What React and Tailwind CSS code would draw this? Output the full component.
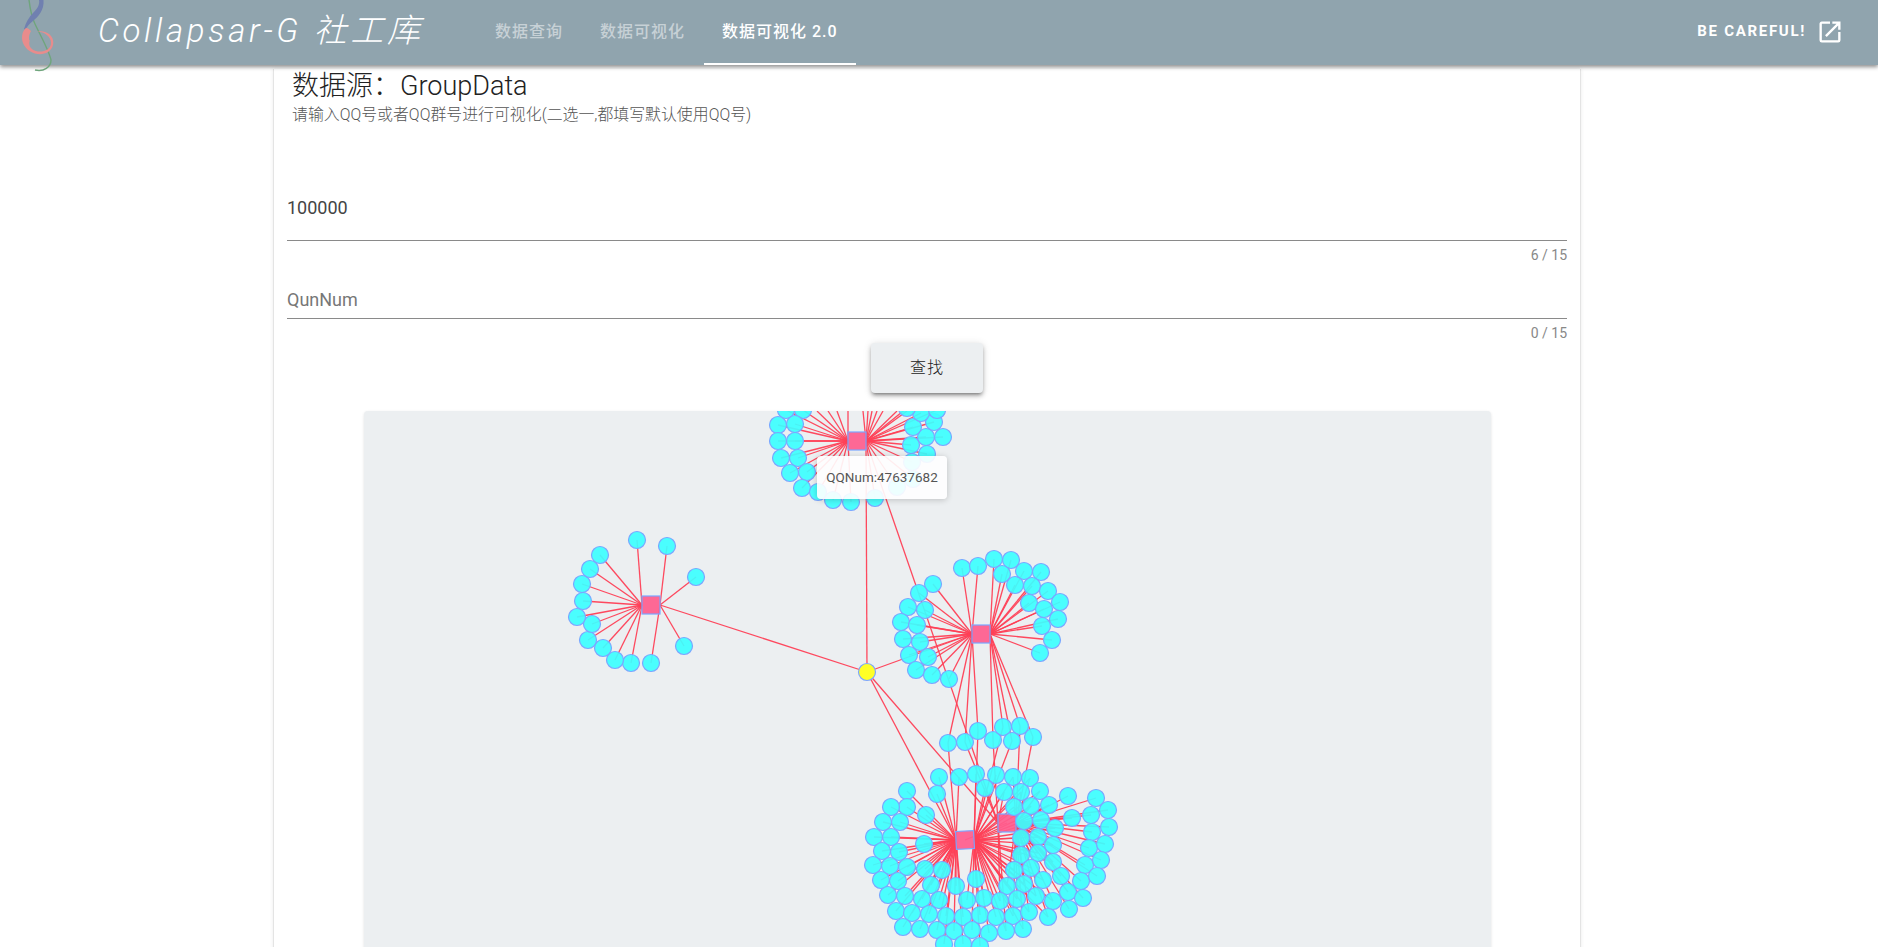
import React from "react";

// graph positions, in page pixels (svg viewBox starts at the panel's corner)
const TOP_HUB = [857, 441];
const RIGHT_HUB = [981, 634];
const LEFT_HUB = [651, 605];
const BOTTOM_HUB_A = [965, 840];
const BOTTOM_HUB_B = [1007, 823];
const CENTER = [867, 672];

const topNodes = [
  [786, 410], [803, 410], [778, 425], [795, 424], [778, 441], [795, 441], [781, 458], [798, 458], [790, 473],
  [807, 472], [802, 488], [818, 492], [833, 500], [851, 502], [875, 498], [897, 487], [913, 479], [912, 462],
  [927, 454], [911, 445], [926, 437], [943, 437], [913, 427], [934, 422], [921, 413], [937, 410], [907, 408],
];

// the rest of the top cluster sits above the panel, only its lines show
const topCutOff = [
  [817, 411], [828, 411], [837, 411], [848, 411], [863, 411], [868, 411], [872, 411], [877, 411], [883, 411], [897, 411], [907, 411],
];

const rightNodes = [
  [962, 568], [978, 566], [994, 559], [1011, 560], [1024, 571], [1041, 572], [1002, 574], [1015, 585], [1032, 586],
  [1048, 591], [1060, 602], [1029, 603], [1044, 609], [1058, 619], [1042, 626], [1052, 640], [1040, 653], [933, 584],
  [919, 593], [908, 607], [925, 610], [901, 622], [917, 625], [903, 639], [920, 642], [909, 655], [928, 657],
  [916, 670], [932, 675], [949, 679],
];

const leftNodes = [
  [637, 540], [667, 546], [696, 577], [684, 646], [651, 663], [631, 663], [615, 660], [603, 648],
  [588, 640], [592, 624], [577, 617], [583, 601], [582, 584], [590, 569], [600, 555],
];

const sharedNodes = [
  [948, 743], [965, 742], [978, 731], [993, 740], [1003, 727], [1020, 726], [1012, 741], [1033, 737],
];

const bottomNodes = [
  [939, 777], [959, 777], [976, 774], [996, 775], [1013, 777], [1030, 778], [937, 794], [985, 788], [1004, 792],
  [1021, 792], [1040, 791], [907, 791], [1068, 796], [1096, 798], [1108, 810], [1091, 815], [1014, 807], [1031, 806],
  [1049, 805], [907, 807], [891, 807], [926, 815], [883, 822], [900, 822], [1024, 821], [1041, 820], [1072, 818],
  [1055, 828], [1092, 832], [1109, 827], [874, 837], [891, 837], [1021, 838], [1038, 837], [924, 844], [1053, 845],
  [1089, 848], [1105, 844], [882, 851], [899, 852], [1021, 855], [1038, 853], [1053, 862], [1085, 865], [1101, 860],
  [873, 865], [890, 866], [907, 867], [925, 869], [942, 870], [1014, 870], [1031, 868], [1061, 876], [1081, 881],
  [1097, 876], [881, 880], [898, 881], [931, 885], [956, 886], [976, 879], [1007, 886], [1024, 884], [1043, 880],
  [1068, 892], [1083, 898], [888, 895], [905, 896], [922, 899], [939, 900], [967, 900], [984, 898], [1000, 901],
  [1017, 899], [1036, 896], [1053, 901], [1069, 909], [896, 911], [912, 913], [929, 914], [946, 916], [963, 917],
  [980, 915], [996, 917], [1013, 916], [1029, 912], [1048, 917], [903, 927], [920, 929], [937, 930], [954, 931],
  [972, 930], [989, 933], [1006, 931], [1023, 929], [944, 944], [963, 944], [980, 946],
];

// lines leave a square from the middle of its left or right side
function side(hub, n) {
  return [n[0] < hub[0] ? hub[0] - 9 : hub[0] + 9, hub[1]];
}

function buildEdges() {
  const edges = [
    [[866, 441], CENTER],
    [[866, 441], side(BOTTOM_HUB_B, CENTER)],
    [side(LEFT_HUB, CENTER), CENTER],
    [side(RIGHT_HUB, CENTER), CENTER],
    [CENTER, side(BOTTOM_HUB_A, CENTER)],
    [CENTER, side(BOTTOM_HUB_B, CENTER)],
    [BOTTOM_HUB_A, BOTTOM_HUB_B],
  ];
  const link = (hub, n) => edges.push([side(hub, n), n]);
  topNodes.forEach((n) => link(TOP_HUB, n));
  topCutOff.forEach((n) => link(TOP_HUB, n));
  rightNodes.forEach((n) => link(RIGHT_HUB, n));
  leftNodes.forEach((n) => link(LEFT_HUB, n));
  sharedNodes.forEach((n, i) => {
    link(RIGHT_HUB, n);
    link(i % 2 ? BOTTOM_HUB_B : BOTTOM_HUB_A, n);
  });
  bottomNodes.forEach((n) => {
    if (n[0] < 1060) link(BOTTOM_HUB_A, n);
    if (n[0] >= 1000) link(BOTTOM_HUB_B, n);
  });
  return edges;
}

function Hub({ at, tilt = 0 }) {
  return (
    <rect
      x={at[0] - 9}
      y={at[1] - 9}
      width="18"
      height="18"
      fill="#ff5c8d"
      fillOpacity="0.92"
      stroke="#7ba6ff"
      strokeWidth="1.2"
      transform={`rotate(${tilt} ${at[0]} ${at[1]})`}
    />
  );
}

function Graph() {
  const edges = buildEdges();
  const nodes = [...topNodes, ...rightNodes, ...leftNodes, ...sharedNodes, ...bottomNodes];
  return (
    <svg viewBox="364 411 1127 536" className="block w-[1127px] h-[536px]">
      {edges.map((e, i) => (
        <line key={i} x1={e[0][0]} y1={e[0][1]} x2={e[1][0]} y2={e[1][1]} stroke="#ff4057" strokeWidth="1.3" opacity="0.95" />
      ))}
      <Hub at={TOP_HUB} />
      <Hub at={RIGHT_HUB} />
      <Hub at={LEFT_HUB} />
      <Hub at={BOTTOM_HUB_B} />
      <Hub at={BOTTOM_HUB_A} tilt={-3} />
      {nodes.map((n, i) => (
        <circle key={i} cx={n[0]} cy={n[1]} r="8.5" fill="#3cffff" fillOpacity="0.92" stroke="#7ba6ff" strokeWidth="1.2" />
      ))}
      <circle cx={CENTER[0]} cy={CENTER[1]} r="8.5" fill="#ffff26" stroke="#7ba6ff" strokeWidth="1.2" />
    </svg>
  );
}

function Logo() {
  return (
    <svg viewBox="0 0 60 75" className="absolute left-0 top-0 w-[60px] h-[75px]" fill="none">
      <path d="M29 0 C30 8 31 16 35 24 C38 31 49 50 51 60 C51 67 44 72 35 70" stroke="#6fa57c" strokeWidth="1.4" />
      <path d="M39 0 H43.5 C44.5 10 38 17 33 21 C29 24 27 27 25 30 L24 29 C26 22 29 17 33 13 C37 9 40 5 39 0 Z" fill="#7080b0" />
      <path
        d="M26 28 C22 31 21 38 23 43 C27 53 40 57 48 52 C56 47 55 35 45 32 C42 31 39 31 36 32 C43 31 51 36 51 43 C51 50 42 53 36 51 C30 49 28 45 30 40 C29 42 28 36 31 31 C29 29 28 28 26 28 Z"
        fill="#e88c8c"
      />
    </svg>
  );
}

function Tab({ label, active }) {
  return (
    <div
      className={
        active
          ? "h-[65px] px-[18px] flex items-center text-white border-b-2 border-white font-medium"
          : "h-[65px] px-[18px] flex items-center text-white/50 pb-[2px] font-medium"
      }
    >
      {label}
    </div>
  );
}

function CountedField({ value, placeholder, count, className, gapClass }) {
  return (
    <div className={className}>
      <input
        readOnly
        value={value}
        placeholder={placeholder}
        className={`w-full h-[30px] text-lg text-[#444] placeholder:text-[#777] outline-none border-b border-[#8a8a8a] box-content ${gapClass}`}
      />
      <div className="text-right text-sm leading-[14px] text-[#888] mt-[7px]">{count}</div>
    </div>
  );
}

export default function App() {
  return (
    <div className="h-screen overflow-hidden bg-white font-[Roboto,'Noto_Sans_CJK_SC',sans-serif]">
      <header className="relative z-10 h-[65px] bg-[#90a4ae] shadow-[0_2px_4px_rgba(0,0,0,0.45)] flex items-center">
        <Logo />
        <div className="ml-[98px] mb-[4px] w-[379px] text-[33px] leading-none font-light italic text-white tracking-[3.7px] whitespace-nowrap">
          Collapsar-G 社工库
        </div>
        <nav className="flex gap-px text-[16px] tracking-[1px]">
          <Tab label="数据查询" />
          <Tab label="数据可视化" />
          <Tab label="数据可视化 2.0" active />
        </nav>
        <div className="ml-auto mr-[34px] mb-[2px] flex items-center gap-[10px] text-white">
          <span className="text-[15px] font-bold tracking-[1.7px]">BE CAREFUL!</span>
          <svg viewBox="0 0 24 24" className="w-[28px] h-[28px]" fill="currentColor">
            <path d="M14,3V5H17.59L7.76,14.83L9.17,16.24L19,6.41V10H21V3M19,19H5V5H12V3H5C3.89,3 3,3.9 3,5V19A2,2 0 0,0 5,21H19A2,2 0 0,0 21,19V12H19V19Z" />
          </svg>
        </div>
      </header>

      <main className="ml-[273px] w-[1308px] h-[900px] bg-white border-x border-[#e4e4e4] shadow-[0_0_4px_rgba(0,0,0,0.08)] px-[13px]">
        <h2 className="ml-[5px] mt-[4px] text-[27px] leading-[34px] font-light text-[#222]">数据源：GroupData</h2>
        <p className="ml-[5px] mt-[4px] text-[15.9px] leading-[16px] font-light text-[#555]">请输入QQ号或者QQ群号进行可视化(二选一,都填写默认使用QQ号)</p>

        <CountedField value="100000" count="6 / 15" className="mt-[69px]" gapClass="pb-[18px]" />
        <CountedField placeholder="QunNum" count="0 / 15" className="mt-[22px]" gapClass="pb-[4px]" />

        <div className="flex justify-center mt-[3px]">
          <button className="w-[112px] h-[50px] rounded bg-[#eceff1] text-base font-light tracking-[1px] text-[#222] shadow-[0_3px_3px_-2px_rgba(0,0,0,0.3),0_3px_4px_rgba(0,0,0,0.25),0_1px_8px_rgba(0,0,0,0.12)]">
            查找
          </button>
        </div>

        <div className="relative mt-[18px] ml-[77px] w-[1127px] h-[640px] rounded bg-[#eceff1] shadow-[0_1px_3px_rgba(0,0,0,0.12)] overflow-hidden">
          <Graph />
          <div className="absolute left-[453px] top-[45px] w-[130px] h-[43px] flex items-center justify-center rounded bg-white/90 shadow-[0_1px_6px_rgba(0,0,0,0.2)] text-[13.5px] text-[#555]">
            QQNum:47637682
          </div>
        </div>
      </main>
    </div>
  );
}
